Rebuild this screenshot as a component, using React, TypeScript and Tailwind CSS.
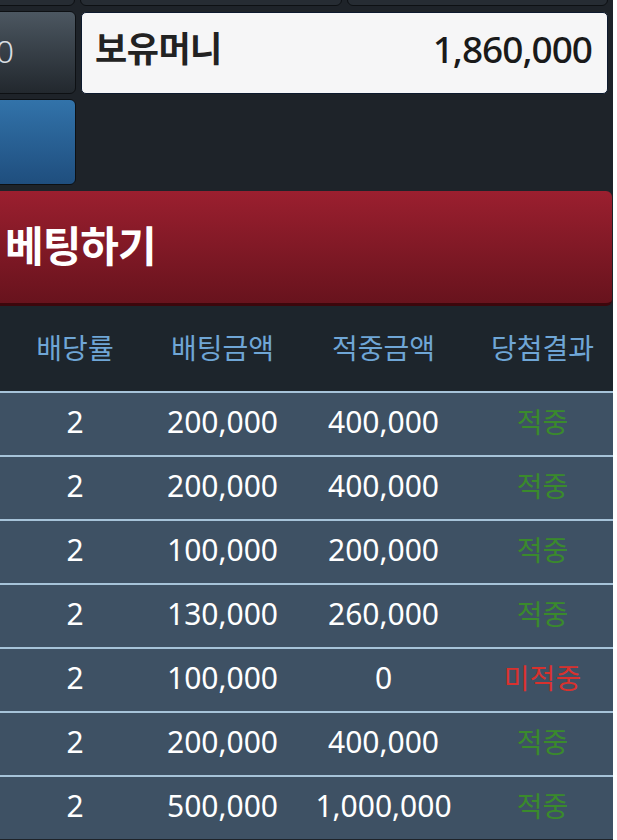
const rows = [
  { rate: "2", bet: "200,000", win: "400,000", hit: true },
  { rate: "2", bet: "200,000", win: "400,000", hit: true },
  { rate: "2", bet: "100,000", win: "200,000", hit: true },
  { rate: "2", bet: "130,000", win: "260,000", hit: true },
  { rate: "2", bet: "100,000", win: "0", hit: false },
  { rate: "2", bet: "200,000", win: "400,000", hit: true },
  { rate: "2", bet: "500,000", win: "1,000,000", hit: true },
];

const cols = "grid grid-cols-[150px_145px_177px_141px]";

export default function App() {
  return (
    <div
      className="min-h-[840px] w-[617px] bg-white"
      style={{ fontFamily: '"Noto Sans", "Noto Sans CJK KR", sans-serif' }}
    >
      <div className="w-[613px] h-[840px] overflow-hidden bg-[#1e2329]">
        {/* top row, mostly scrolled away */}
        <div className="flex gap-[5px] -mt-[34px]">
          <div className="-ml-[40px] w-[115px] h-[40px] shrink-0 rounded-[6px] border border-[#0d1013] bg-[#262c33]" />
          <div className="w-[262px] h-[40px] shrink-0 rounded-[6px] border border-[#0d1013] bg-[#262c33]" />
          <div className="w-[261px] h-[40px] shrink-0 rounded-[6px] border border-[#0d1013] bg-[#262c33]" />
        </div>

        <div className="mt-[5px] flex gap-[5px]">
          <div className="flex flex-col gap-[5px] -ml-[40px] w-[116px] shrink-0">
            <div className="h-[83px] rounded-[6px] border border-[#0d1013] bg-gradient-to-b from-[#4c5761] to-[#22282e] flex items-center justify-end pr-[61px] pb-[4px]">
              <span className="text-[32px] text-[#d8dde2] font-light">0</span>
            </div>
            <div className="h-[86px] rounded-[6px] border border-[#0d1013] bg-gradient-to-b from-[#3273aa] to-[#1f4e7e]" />
          </div>
          <div className="mt-[1px] w-[527px] h-[82px] rounded-[5px] border border-[#0d1a2e] bg-[#f6f6f7] flex items-center justify-between pl-[13px] pr-[15px] pb-[8px]">
            <span className="text-[35px] font-semibold text-[#222] tracking-[-0.5px]">보유머니</span>
            <span className="text-[37px] font-medium text-[#1a1a1a] tracking-[-1px]">1,860,000</span>
          </div>
        </div>

        {/* bet button */}
        <div className="mt-[6px] -ml-[20px] w-[632px] h-[115px] rounded-[6px] border-b-[3px] border-[#3c070c] bg-gradient-to-b from-[#9b1f2f] to-[#68131d] flex items-center pl-[25px] pb-[4px]">
          <span className="text-[42px] font-bold text-white tracking-[-1px]">베팅하기</span>
        </div>

        {/* table */}
        <div className="w-[613px]">
          <div className={`${cols} h-[85px] items-center bg-[#1d252c] text-[28px] text-[#6fa6d6] pb-[2px]`}>
            <div className="text-center">배당률</div>
            <div className="text-center">배팅금액</div>
            <div className="text-center">적중금액</div>
            <div className="text-center">당첨결과</div>
          </div>
          {rows.map((r, i) => (
            <div
              key={i}
              className={`${cols} h-[64px] items-center border-t-2 border-[#a6c3d9] bg-[#3e5164] text-white pb-[5px]`}
            >
              <div className="text-center text-[30px]">{r.rate}</div>
              <div className="text-center text-[30px]">{r.bet}</div>
              <div className="text-center text-[30px]">{r.win}</div>
              <div
                className={`text-center text-[28px] ${r.hit ? "text-[#3a8a2c]" : "text-[#d8312e]"}`}
              >
                {r.hit ? "적중" : "미적중"}
              </div>
            </div>
          ))}
        </div>
      </div>
    </div>
  );
}
